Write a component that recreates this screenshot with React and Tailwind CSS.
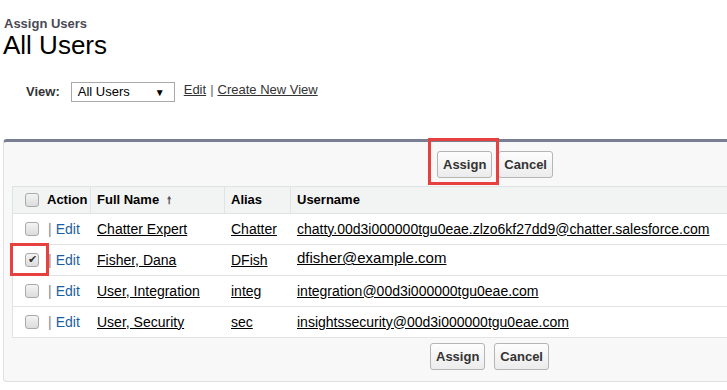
import React from 'react';

const users = [
  { name: 'Chatter Expert', alias: 'Chatter', username: 'chatty.00d3i000000tgu0eae.zlzo6kf27dd9@chatter.salesforce.com' },
  { name: 'Fisher, Dana', alias: 'DFish', username: 'dfisher@example.com', checked: true },
  { name: 'User, Integration', alias: 'integ', username: 'integration@00d3i000000tgu0eae.com' },
  { name: 'User, Security', alias: 'sec', username: 'insightssecurity@00d3i000000tgu0eae.com' },
];

const Check = ({ checked }) => (
  <span className="flex items-center justify-center w-[14px] h-[14px] rounded-[3px] border border-[#a9a9a9] bg-gradient-to-b from-[#f4f4f4] to-[#dcdcdc]">
    {checked && <span className="text-[11px] leading-none text-[#333] -mt-px">✔</span>}
  </span>
);

const Btn = ({ children }) => (
  <button className="h-[27px] px-[5px] rounded-[3px] border border-[#b5b5b5] bg-gradient-to-b from-[#fdfdfd] to-[#ececec] text-[13px] font-bold text-[#333]">
    {children}
  </button>
);

const App = () => {
  return (
    <div className="w-[727px] h-[390px] overflow-hidden bg-white text-[13px] text-black" style={{ fontFamily: '"Liberation Sans", Arial, sans-serif' }}>
      <div className="pl-[4px] pt-[16px]">
        <div className="text-[13px] font-bold text-[#4a4a56] leading-[15px]">Assign Users</div>
        <div className="text-[26px] leading-[28px] -ml-px">All Users</div>
      </div>

      <div className="flex items-center mt-[23px] pl-[26px] h-[20px]">
        <span className="font-bold text-[#333]">View:</span>
        <div className="ml-[11px] w-[104px] h-[20px] border border-[#a9a9a9] flex items-center justify-between pl-[6px] pr-[9px]">
          <span>All Users</span>
          <span className="text-[10px]">▼</span>
        </div>
        <a className="ml-[9px] underline text-[#333] -mt-[4px]">Edit</a>
        <span className="mx-[4px] text-[#666] -mt-[4px]">|</span>
        <a className="underline text-[#333] -mt-[4px]">Create New View</a>
      </div>

      <div className="relative mt-[37px] ml-[3px] w-[740px] h-[243px] rounded-[4px] border border-[#e0e0e0] border-t-[3px] border-t-[#7a7e94] bg-[#f8f8f8]">
        <div className="flex gap-[6px] pl-[433px] pt-[9px] h-[44px]">
          <Btn>Assign</Btn>
          <Btn>Cancel</Btn>
        </div>
        <div className="absolute left-[424px] top-[-4px] w-[71px] h-[47px] border-[3px] border-[#e8403f]" />

        <div className="ml-[8px] border-l border-[#e0e3e5] bg-white text-[14px]">
          <div className="flex h-[28px] items-center bg-[#f2f3f3] border-y border-[#e0e3e5] font-bold text-[13px]">
            <div className="w-[78px] h-full flex items-center pl-[12px] gap-[8px] border-r border-[#e0e3e5]">
              <Check />
              <span>Action</span>
            </div>
            <div className="w-[134px] h-full flex items-center pl-[6px] border-r border-[#e0e3e5]">
              Full Name <span className="ml-[8px] text-[10px] text-[#555]">🠕</span>
            </div>
            <div className="w-[66px] h-full flex items-center pl-[6px] border-r border-[#e0e3e5]">Alias</div>
            <div className="flex-1 h-full flex items-center pl-[6px]">Username</div>
          </div>
          {users.map((u) => (
            <div key={u.name} className="flex h-[31px] items-center border-b border-[#e3e3e3]">
              <div className="w-[78px] flex items-center pl-[12px]">
                <Check checked={u.checked} />
                <span className="ml-[9px] text-[#888]">|</span>
                <span className="ml-[4px] text-[#1b5f9e]">Edit</span>
              </div>
              <div className="w-[134px] pl-[6px]"><a className="underline">{u.name}</a></div>
              <div className="w-[66px] pl-[6px]"><a className="underline">{u.alias}</a></div>
              <div className="flex-1 pl-[6px]">
                <a className={u.checked ? 'underline text-[15px] -mt-[3px] block' : 'underline'}>{u.username}</a>
              </div>
            </div>
          ))}
        </div>

        <div className="flex gap-[9px] pl-[426px] pt-[5px]">
          <Btn>Assign</Btn>
          <Btn>Cancel</Btn>
        </div>

        <div className="absolute left-[6px] top-[101px] w-[39px] h-[33px] border-[3px] border-[#e8403f]" />
      </div>
    </div>
  );
};

export default App;
